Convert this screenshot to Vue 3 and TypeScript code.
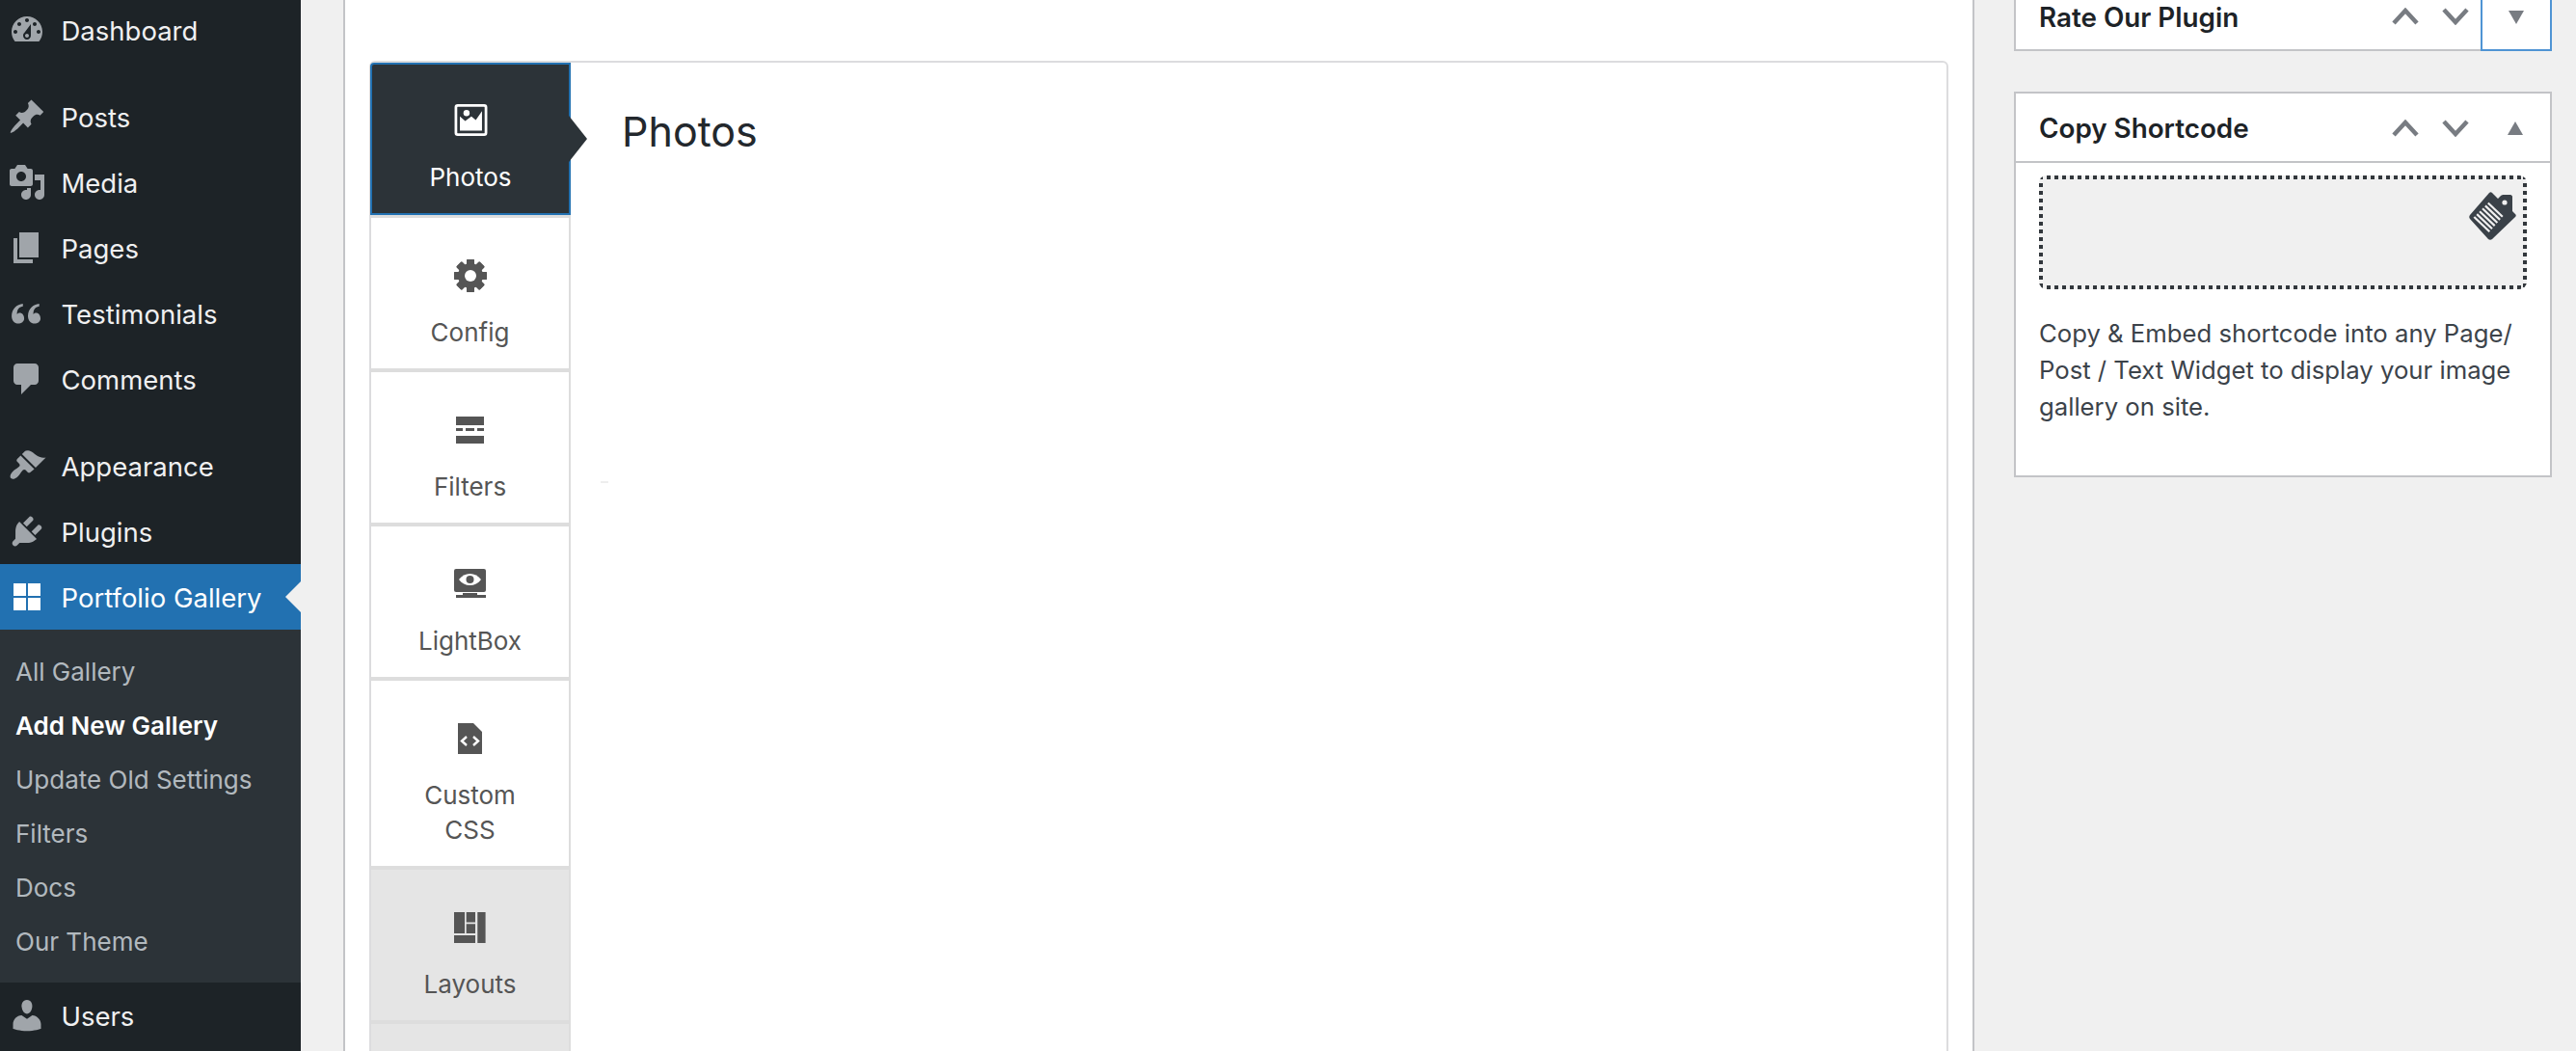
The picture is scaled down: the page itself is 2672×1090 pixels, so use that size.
<script setup lang="ts">
interface MenuItem {
  label: string;
  path: string;
  gap?: boolean;
}

const topMenu: MenuItem[] = [
  {
    label: "Dashboard",
    gap: true,
    path: "M3.76 16h12.48c1.1-1.37 1.76-3.11 1.76-5 0-4.42-3.58-8-8-8s-8 3.58-8 8c0 1.89.66 3.63 1.76 5zM10 4c.55 0 1 .45 1 1s-.45 1-1 1-1-.45-1-1 .45-1 1-1zM6 6c.55 0 1 .45 1 1s-.45 1-1 1-1-.45-1-1 .45-1 1-1zm8 0c.55 0 1 .45 1 1s-.45 1-1 1-1-.45-1-1 .45-1 1-1zm-5.37 5.55L12 7v6c0 1.1-.9 2-2 2s-2-.9-2-2c0-.57.24-1.08.63-1.45zM4 10c.55 0 1 .45 1 1s-.45 1-1 1-1-.45-1-1 .45-1 1-1zm12 0c.55 0 1 .45 1 1s-.45 1-1 1-1-.45-1-1 .45-1 1-1zm-5 3c0-.55-.45-1-1-1s-1 .45-1 1 .45 1 1 1 1-.45 1-1z",
  },
  {
    label: "Posts",
    path: "M10.44 3.02l1.82-1.82 6.36 6.35-1.83 1.82c-1.05-.68-2.48-.57-3.41.36l-.75.75c-.92.93-1.04 2.35-.35 3.41l-1.83 1.82-2.41-2.41-2.8 2.79c-.42.42-3.38 2.71-3.8 2.29s1.86-3.39 2.28-3.81l2.79-2.79L4.1 9.36l1.83-1.82c1.05.69 2.48.57 3.4-.36l.75-.75c.93-.92 1.05-2.35.36-3.41z",
  },
  {
    label: "Media",
    path: "M13 11V4c0-.55-.45-1-1-1h-1.67L9 1H5L3.67 3H2c-.55 0-1 .45-1 1v7c0 .55.45 1 1 1h10c.55 0 1-.45 1-1zM7 4.5c1.38 0 2.5 1.12 2.5 2.5S8.38 9.5 7 9.5 4.5 8.38 4.5 7 5.62 4.5 7 4.5zM14 6h5v10.5c0 1.38-1.12 2.5-2.5 2.5S14 17.88 14 16.5s1.12-2.5 2.5-2.5c.17 0 .34.02.5.05V9h-3V6zm-4 8.05V13h2v3.5c0 1.38-1.12 2.5-2.5 2.5S7 17.88 7 16.5 8.12 14 9.5 14c.17 0 .34.02.5.05z",
  },
  { label: "Pages", path: "M6 15V2h10v13H6zm-1 1h8v2H3V5h2v11z" },
  {
    label: "Testimonials",
    path: "M8.54 12.74c0-.87-.24-1.61-.72-2.22-.73-.92-2.14-1.03-2.96-.08-.09-1.02.13-2.31.78-2.98.61-.62 1.47-.92 2.25-1.05V5c-1.61.2-3.02.77-4.06 1.84-1.03 1.05-1.79 2.55-1.79 4.42 0 1.09.26 2.02.78 2.72.72.97 1.72 1.32 2.58 1.32 1.73 0 3.14-1.14 3.14-2.56zm8.46 0c0-.87-.24-1.61-.72-2.22-.73-.92-2.14-1.03-2.96-.08-.09-1.02.13-2.31.78-2.98.61-.62 1.47-.92 2.25-1.05V5c-1.61.2-3.02.77-4.06 1.84-1.03 1.05-1.79 2.55-1.79 4.42 0 1.09.26 2.02.78 2.72.72.97 1.72 1.32 2.58 1.32 1.73 0 3.14-1.14 3.14-2.56z",
  },
  {
    label: "Comments",
    gap: true,
    path: "M5 2h9c1.1 0 2 .9 2 2v7c0 1.1-.9 2-2 2h-2l-5 5v-5H5c-1.1 0-2-.9-2-2V4c0-1.1.9-2 2-2z",
  },
  {
    label: "Appearance",
    path: "M14.48 11.06L7.41 3.99l1.5-1.5c.5-.56 2.3-.47 3.51.32 1.21.8 1.43 1.28 2.91 2.1 1.18.64 2.45 1.26 4.45.85zm-.71.71L6.7 4.7 4.93 6.47c-.39.39-.39 1.02 0 1.41l1.06 1.06c.39.39.39 1.03 0 1.42-.6.6-1.43 1.11-2.21 1.69-.35.26-.7.53-1.01.84-1.34 1.34-1.86 2.86-1.06 3.66s2.32.28 3.66-1.06c.3-.3.57-.65.83-1 .58-.78 1.09-1.61 1.69-2.21.39-.39 1.02-.39 1.41 0l1.06 1.06c.39.39 1.02.39 1.41 0z",
  },
  {
    label: "Plugins",
    path: "M13.11 4.36L9.87 7.6 8 5.73l3.24-3.24c.35-.34 1.05-.2 1.56.32.52.51.66 1.21.31 1.55zm-8 1.77l.91-1.12 9.01 9.01-1.19.84c-.71.71-2.63 1.16-3.82 1.16H6.14L4.9 17.26c-.59.59-1.54.59-2.12 0-.59-.58-.59-1.53 0-2.12l1.24-1.24v-3.88c0-1.13.4-3.19 1.09-3.89zm7.26 3.97l3.24-3.24c.34-.35 1.04-.21 1.55.31.52.51.66 1.21.31 1.55l-3.24 3.25z",
  },
];

const subMenu = ["All Gallery", "Add New Gallery", "Update Old Settings", "Filters", "Docs", "Our Theme"];

const usersPath =
  "M10 9.25c-2.27 0-2.73-3.44-2.73-3.44C7 4.02 7.82 2 9.97 2c2.16 0 2.98 2.02 2.71 3.81 0 0-.41 3.44-2.68 3.44zm0 2.57L12.72 10c2.39 0 4.52 2.33 4.52 4.53v2.49s-3.65 1.13-7.24 1.13c-3.65 0-7.24-1.13-7.24-1.13v-2.49c0-2.25 1.94-4.48 4.47-4.48z";

const gearTeeth = [0, 45, 90, 135, 180, 225, 270, 315];
const tagStripes = [0, 1, 2, 3, 4, 5];
</script>

<template>
  <div class="page">
    <aside class="sidebar">
      <div v-for="item in topMenu" :key="item.label" class="menu-item" :class="{ gap: item.gap }">
        <svg class="menu-icon" viewBox="0 0 20 20"><path :d="item.path" fill-rule="evenodd" /></svg>
        <span>{{ item.label }}</span>
      </div>

      <div class="menu-item active">
        <svg class="menu-icon" viewBox="0 0 20 20"><path d="M3 3h6.500v6.500H3zM10.500 3H17v6.500h-6.500zM3 10.500h6.500V17H3zM10.500 10.500H17V17h-6.500z" /></svg>
        <span>Portfolio Gallery</span>
        <i class="menu-arrow"></i>
      </div>
      <ul class="submenu">
        <li v-for="sub in subMenu" :key="sub" :class="{ current: sub === 'Add New Gallery' }">{{ sub }}</li>
      </ul>

      <div class="menu-item">
        <svg class="menu-icon" viewBox="0 0 20 20"><path :d="usersPath" /></svg>
        <span>Users</span>
      </div>
    </aside>

    <main class="editor">
      <div class="tabbox">
        <nav class="tabs">
          <div class="tab selected">
            <svg class="tab-icon" width="37" height="36" viewBox="0 0 37 36">
              <rect x="1.500" y="1.500" width="34" height="33" rx="2" fill="none" stroke="#fff" stroke-width="3" />
              <circle cx="13.500" cy="10" r="3.500" fill="#fff" />
              <path d="M6 14l6 5 7-5 5 4 7-10v22H6z" fill="#fff" />
            </svg>
            <span>Photos</span>
            <i class="tab-arrow"></i>
          </div>

          <div class="tab">
            <svg class="tab-icon" width="36" height="36" viewBox="0 0 36 36">
              <rect v-for="a in gearTeeth" :key="a" x="14" y="1" width="8" height="34" rx="1" :transform="`rotate(${a} 18 18)`" />
              <path d="M18 5a13 13 0 1 0 0 26 13 13 0 0 0 0-26z" />
              <circle cx="18" cy="18" r="6" fill="#fff" />
            </svg>
            <span>Config</span>
          </div>

          <div class="tab">
            <svg class="tab-icon" width="29" height="36" viewBox="0 0 29 36">
              <path d="M0 4h29v9H0zM0 16h7v3H0zM10 16h9v3h-9zM22 16h7v3h-7zM0 24h29v8H0z" />
            </svg>
            <span>Filters</span>
          </div>

          <div class="tab">
            <svg class="tab-icon" width="33" height="36" viewBox="0 0 33 36">
              <rect x="0" y="2" width="33" height="24" rx="2" />
              <path d="M9 27h15v2h9v3H2v-3h7z" />
              <path d="M5 13c3-4 7-6 11.500-6S25 9 28 13c-3 4-7 6-11.500 6S8 17 5 13z" fill="#fff" />
              <circle cx="16.500" cy="13" r="4" />
            </svg>
            <span>LightBox</span>
          </div>

          <div class="tab">
            <svg class="tab-icon" width="25" height="36" viewBox="0 0 25 36">
              <path d="M0 2h16l9 9v23H0z" />
              <path d="M9 16l-5 4.500L9 25M16 16l5 4.500-5 4.500" fill="none" stroke="#fff" stroke-width="2.400" />
            </svg>
            <span>Custom<br />CSS</span>
          </div>

          <div class="tab muted">
            <svg class="tab-icon" width="33" height="36" viewBox="0 0 33 36">
              <path d="M0 2h11v22H0zM12.700 2H22v10.500h-9.300zM12.700 14.300H22V24h-9.300zM24.300 2h8.300v32h-8.300zM0 26h22v8H0z" />
            </svg>
            <span>Layouts</span>
          </div>

          <div class="tab muted"></div>
        </nav>

        <section class="tab-panel">
          <h2>Photos</h2>
          <i class="stray-mark"></i>
        </section>
      </div>
    </main>

    <aside class="side-col">
      <div class="postbox rate">
        <div class="postbox-head">
          <h3>Rate Our Plugin</h3>
          <button class="handle">
            <svg width="28" height="18" viewBox="0 0 28 18"><path d="M2 16L14 3l12 13" /></svg>
          </button>
          <button class="handle">
            <svg width="28" height="18" viewBox="0 0 28 18"><path d="M2 2l12 13L26 2" /></svg>
          </button>
          <button class="toggle focused"><i class="tri down"></i></button>
        </div>
      </div>

      <div class="postbox">
        <div class="postbox-head bordered">
          <h3>Copy Shortcode</h3>
          <button class="handle">
            <svg width="28" height="18" viewBox="0 0 28 18"><path d="M2 16L14 3l12 13" /></svg>
          </button>
          <button class="handle">
            <svg width="28" height="18" viewBox="0 0 28 18"><path d="M2 2l12 13L26 2" /></svg>
          </button>
          <button class="toggle"><i class="tri up"></i></button>
        </div>
        <div class="postbox-body">
          <div class="shortcode">
            <svg class="clip-icon" width="60" height="60" viewBox="0 0 60 60">
              <path d="M28 6c1-1 2-1 3 0l6 6 3-3c1-1 2-1 3-1h7c1 0 2 1 2 2v15l3 3c1 1 1 2 0 3L31 54c-1 1-3 1-4 0L8 33c-1-1-1-3 0-4z" fill="#3a4148" />
              <circle cx="44" cy="16" r="2.600" fill="#f0f0f0" />
              <path
                v-for="n in tagStripes"
                :key="n"
                :d="`M${12.3 + n * 2.9} ${31 - n * 2.9}l${16 - n * 0.2} ${15.3 - n * 0.2}`"
                stroke="#f0f0f0"
                stroke-width="2.200"
              />
            </svg>
          </div>
          <p>Copy &amp; Embed shortcode into any Page/ Post / Text Widget to display your image gallery on site.</p>
        </div>
      </div>
    </aside>
  </div>
</template>

<style>
html,
body {
  margin: 0;
  background: #f0f0f0;
}
</style>

<style scoped>
.page {
  display: flex;
  align-items: flex-start;
  height: 1090px;
  width: 2672px;
  overflow: hidden;
  background: #f0f0f0;
  font-family: Inter, "Liberation Sans", sans-serif;
}

.sidebar {
  flex: none;
  width: 312px;
  height: 1094px;
  margin-top: -3px;
  background: #1d2327;
  color: #f0f0f1;
}

.menu-item {
  position: relative;
  display: flex;
  align-items: center;
  height: 68px;
  font-size: 27.500px;
}

.menu-item span {
  padding-top: 2px;
  margin-left: -0.500px;
}

.menu-item.gap {
  margin-bottom: 22px;
}

.menu-icon {
  flex: none;
  width: 40px;
  height: 40px;
  margin: 0 16px 0 8px;
  fill: #a0a5aa;
}

.menu-item.active {
  background: #2271b1;
  color: #fff;
}

.menu-item.active .menu-icon {
  fill: #fff;
}

.menu-arrow {
  position: absolute;
  right: 0;
  top: 18px;
  border: 16px solid transparent;
  border-right-color: #f0f0f0;
  border-left-width: 0;
}

.submenu {
  margin: 0;
  padding: 15px 0;
  list-style: none;
  background: #2c3338;
  color: rgba(240, 246, 252, 0.7);
  font-size: 26px;
}

.submenu li {
  height: 56px;
  line-height: 58px;
  padding-left: 16px;
}

.submenu li.current {
  color: #fff;
  font-weight: 600;
}

.editor {
  flex: none;
  box-sizing: border-box;
  width: 1692px;
  height: 1090px;
  margin-left: 44px;
  padding: 63px 25px 0;
  background: #fff;
  border-left: 2px solid #c3c4c7;
  border-right: 2px solid #c3c4c7;
}

.tabbox {
  display: flex;
  height: 1100px;
  border: 2px solid #dcdcde;
  border-radius: 6px;
}

.tabs {
  flex: none;
  width: 207px;
  border-right: 2px solid #ddd;
  box-sizing: border-box;
}

.tab {
  position: relative;
  box-sizing: border-box;
  display: flex;
  flex-direction: column;
  align-items: center;
  padding: 42px 0 20px;
  border-bottom: 4px solid #ddd;
  color: #555;
  fill: #555;
  font-size: 26px;
  line-height: 36px;
  text-align: center;
}

.tab span {
  position: relative;
  top: 1px;
}

.tab-icon {
  display: block;
  margin-bottom: 22px;
}

.tab.selected {
  margin: 0 -2px 0 -1px;
  padding-top: 41px;
  height: 158px;
  background: #2c3338;
  border: 2px solid #2271b1;
  border-radius: 4px 0 0 0;
  color: #fff;
}

.tab.selected .tab-icon {
  margin-bottom: 24px;
}

.tab.selected + .tab {
  border-top: 3px solid #ddd;
}

.tab.muted {
  background: #e5e5e5;
}

.tab-arrow {
  position: absolute;
  top: 53px;
  right: -19px;
  border: 24px solid transparent;
  border-left: 19px solid #2c3338;
  border-right-width: 0;
}

.tab-panel {
  position: relative;
  flex: 1;
  padding: 46px 53px;
}

.tab-panel h2 {
  margin: 0;
  font-size: 43px;
  line-height: 50px;
  font-weight: 400;
  color: #23282d;
}

.stray-mark {
  position: absolute;
  left: 31px;
  top: 434px;
  width: 8px;
  height: 2px;
  background: #eee;
}

.side-col {
  flex: none;
  width: 558px;
  margin: -19px 0 0 41px;
}

.postbox {
  box-sizing: border-box;
  background: #fff;
  border: 2px solid #c3c4c7;
}

.postbox.rate {
  margin-bottom: 42px;
}

.postbox-head {
  display: flex;
  align-items: center;
  height: 68px;
  padding-left: 24px;
}

.postbox-head.bordered {
  box-sizing: border-box;
  height: 72px;
  padding-top: 2px;
  border-bottom: 2px solid #c3c4c7;
}

.postbox-head h3 {
  flex: 1;
  margin: 0;
  font-size: 27.800px;
  font-weight: 600;
  color: #1d2327;
}

.rate h3 {
  padding-top: 2px;
}

.handle,
.toggle {
  display: flex;
  align-items: center;
  justify-content: center;
  height: 68px;
  padding: 0;
  background: none;
  border: 0;
}

.handle {
  width: 52px;
}

.handle svg {
  fill: none;
  stroke: #787c82;
  stroke-width: 4.500;
}

.toggle {
  box-sizing: border-box;
  width: 72px;
}

.toggle.focused {
  align-self: flex-start;
  height: 70px;
  margin: 0 -2px -2px 0;
  width: 74px;
  border: 2px solid #4f94d4;
}

.tri {
  width: 0;
  height: 0;
  border-left: 8px solid transparent;
  border-right: 8px solid transparent;
}

.tri.down {
  border-top: 14px solid #787c82;
}

.tri.up {
  border-bottom: 14px solid #787c82;
}

.postbox-body {
  padding: 13px 24px 24px;
  color: #3c434a;
  font-size: 25.700px;
  line-height: 38px;
}

.postbox-body p {
  margin: 27px 0 28px;
}

.shortcode {
  position: relative;
  height: 118px;
  border-radius: 8px;
  background:
    linear-gradient(to right, #32373c 50%, transparent 50%) 0 0 / 8px 4px repeat-x,
    linear-gradient(to right, #32373c 50%, transparent 50%) 0 100% / 8px 4px repeat-x,
    linear-gradient(to bottom, #32373c 50%, transparent 50%) 0 0 / 4px 8px repeat-y,
    linear-gradient(to bottom, #32373c 50%, transparent 50%) 100% 0 / 4px 8px repeat-y,
    #f0f0f0;
}

.clip-icon {
  position: absolute;
  top: 12px;
  right: 7px;
}
</style>
